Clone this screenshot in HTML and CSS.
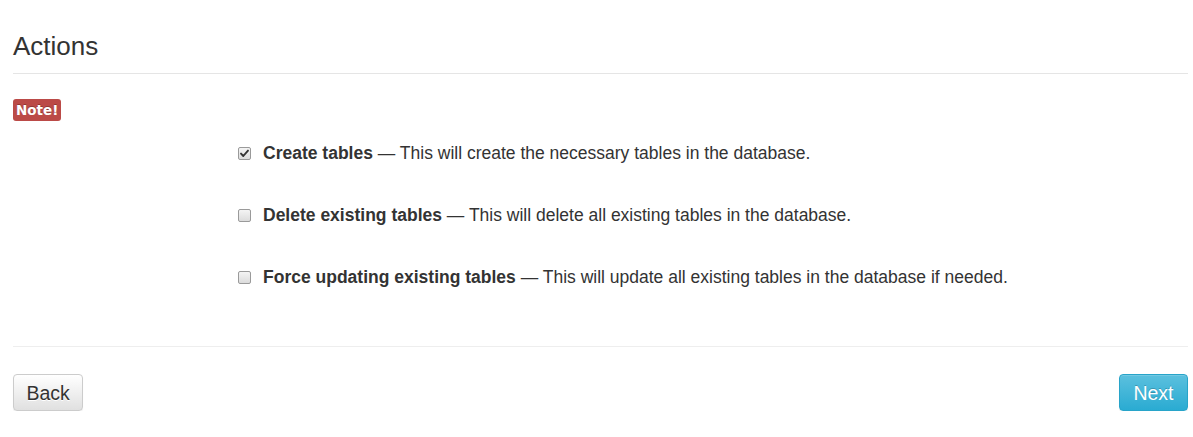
FILE: index.html
```html
<!DOCTYPE html>
<html>
<head>
<meta charset="utf-8">
<link rel="stylesheet" href="styles.css">
</head>
<body>
<div class="page">
  <h2 class="title">Actions</h2>
  <div class="note-row"><span class="label-note">Note!</span></div>
  <div class="options">
    <label class="option"><span class="box"><svg width="11" height="11" viewBox="0 0 11 11"><path d="M2 5.6 L4.3 8 L9 2.6" fill="none" stroke="#333" stroke-width="1.9" stroke-linecap="round" stroke-linejoin="round"/></svg></span><span><b>Create tables</b> — This will create the necessary tables in the database.</span></label>
    <label class="option"><span class="box"></span><span><b>Delete existing tables</b> — This will delete all existing tables in the database.</span></label>
    <label class="option"><span class="box"></span><span><b>Force updating existing tables</b> — This will update all existing tables in the database if needed.</span></label>
  </div>
  <div class="footer">
    <button class="btn btn-default">Back</button>
    <button class="btn btn-info">Next</button>
  </div>
</div>
</body>
</html>
```
FILE: styles.css
```css
html, body { margin: 0; padding: 0; background: #fff; }
body { font-family: "Liberation Sans", Arial, sans-serif; color: #333; font-size: 17.5px; }
.page { padding: 0 5px 0 13px; }
.title {
  margin: 0;
  padding-top: 32px;
  padding-bottom: 13px;
  font-size: 26px;
  font-weight: 400;
  line-height: 28px;
  border-bottom: 1px solid #e5e5e5;
}
.note-row { padding-top: 25px; height: 22px; display: flex; }
.label-note {
  display: inline-block;
  background: #bb4a47;
  color: #fff;
  font-family: "DejaVu Sans", "Open Sans", sans-serif;
  font-weight: 700;
  font-size: 13.5px;
  line-height: 22px;
  height: 22px;
  padding: 0 3px;
  border-radius: 3px;
  text-shadow: 0 -1px 0 rgba(0,0,0,.25);
}
.options {
  padding: 21px 0 58px 225px;
  display: flex;
  flex-direction: column;
  gap: 40px;
  border-bottom: 1px solid #eee;
}
.option { display: flex; align-items: center; height: 22px; line-height: 22px; }
.box {
  width: 11px;
  height: 11px;
  border: 1px solid #9a9a9a;
  border-radius: 2px;
  background: linear-gradient(#f4f4f4, #dcdcdc);
  margin-right: 12px;
  display: flex;
  align-items: center;
  justify-content: center;
  flex: none;
}
.box svg { display: block; }
.footer { display: flex; justify-content: space-between; padding-top: 27px; }
.btn {
  font-family: "Liberation Sans", Arial, sans-serif;
  font-size: 19.5px;
  line-height: 24px;
  padding: 5px 13.5px;
  border-radius: 4px;
  border: 1px solid #ccc;
  height: 37px;
}
.btn-default {
  color: #333;
  background: linear-gradient(#fff, #e0e0e0);
  border-color: #ccc;
  text-shadow: 0 1px 0 #fff;
  box-shadow: inset 0 1px 0 rgba(255,255,255,.15), 0 1px 1px rgba(0,0,0,.075);
  padding: 5px 12.5px;
}
.btn-info {
  color: #fff;
  background: linear-gradient(#5bc0de, #2aabd2);
  border-color: #28a4c9;
  text-shadow: 0 -1px 0 rgba(0,0,0,.2);
  box-shadow: inset 0 1px 0 rgba(255,255,255,.15), 0 1px 1px rgba(0,0,0,.075);
}
```
